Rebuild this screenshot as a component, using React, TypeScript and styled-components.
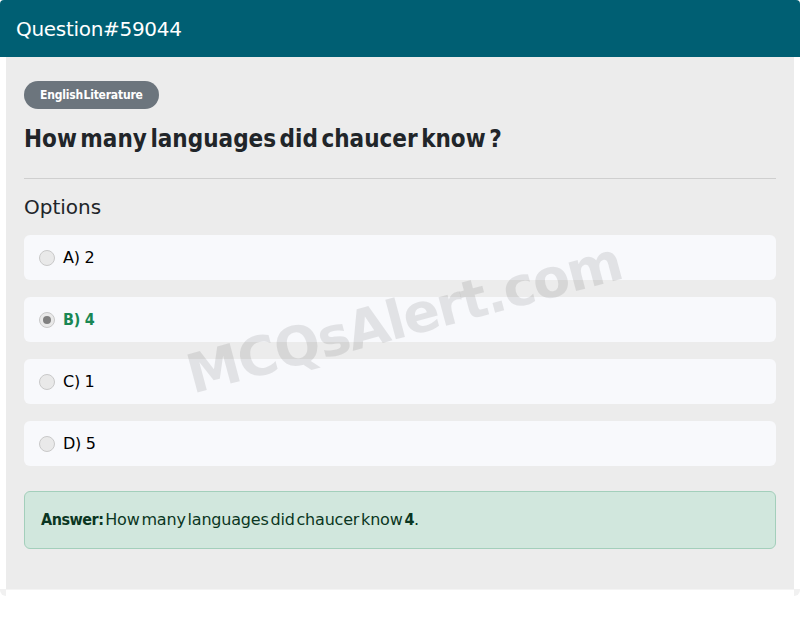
import React from 'react';
import styled, { createGlobalStyle } from 'styled-components';

const GlobalStyle = createGlobalStyle`
  html, body {
    margin: 0;
    padding: 0;
    background: #ffffff;
    font-family: 'DejaVu Sans', 'Liberation Sans', sans-serif;
  }
`;

const Card = styled.div`
  width: 800px;
`;

const Header = styled.div`
  height: 57px;
  background: #005f73;
  color: #ffffff;
  border-radius: 4px 4px 0 0;
  display: flex;
  align-items: center;
  padding: 0 16px;
  box-sizing: border-box;
  font-size: 20px;
  letter-spacing: -0.3px;
`;

const Body = styled.div`
  position: relative;
  overflow: hidden;
  margin: 0 6px;
  background: #ececec;
  padding: 24px 18px 40px;
`;

const Badge = styled.span`
  display: inline-block;
  background: #6c757d;
  color: #ffffff;
  font-family: 'DejaVu Sans Condensed', 'DejaVu Sans', sans-serif;
  font-weight: 700;
  font-size: 12px;
  line-height: 28px;
  height: 28px;
  padding: 0 16px;
  border-radius: 14px;
  letter-spacing: -0.2px;
  word-spacing: -3px;
`;

const Title = styled.h1`
  margin: 14px 0 0;
  font-family: 'DejaVu Sans Condensed', 'DejaVu Sans', sans-serif;
  font-size: 24px;
  font-weight: 700;
  line-height: 32px;
  color: #212529;
  word-spacing: -4px;
`;

const Divider = styled.hr`
  margin: 23px 0 15px;
  border: 0;
  border-top: 1px solid #cfcfcf;
`;

const SectionLabel = styled.h2`
  margin: 0 0 15px;
  font-size: 20px;
  font-weight: 400;
  line-height: 26px;
  color: #212529;
`;

const OptionList = styled.div`
  display: flex;
  flex-direction: column;
  gap: 17px;
`;

const OptionRow = styled.div`
  height: 45px;
  background: #f8f9fc;
  border-radius: 6px;
  display: flex;
  align-items: center;
  padding: 0 15px;
  gap: 8px;
`;

const Radio = styled.span<{ $checked?: boolean }>`
  width: 16px;
  height: 16px;
  box-sizing: border-box;
  border-radius: 50%;
  border: 1px solid #c9c9c9;
  background: #e9e9e9;
  display: flex;
  align-items: center;
  justify-content: center;
  &::after {
    content: '';
    display: ${(p) => (p.$checked ? 'block' : 'none')};
    width: 8px;
    height: 8px;
    border-radius: 50%;
    background: #808080;
  }
`;

const OptionText = styled.span<{ $correct?: boolean }>`
  font-family: ${(p) =>
    p.$correct ? "'DejaVu Sans Condensed', 'DejaVu Sans', sans-serif" : "'DejaVu Sans', sans-serif"};
  font-size: 16px;
  color: ${(p) => (p.$correct ? '#198754' : '#000000')};
  font-weight: ${(p) => (p.$correct ? 700 : 400)};
  letter-spacing: -0.3px;
`;

const AnswerBox = styled.div`
  margin-top: 25px;
  background: #d1e7dd;
  border: 1px solid #a3cfbb;
  border-radius: 6px;
  padding: 18px 16px;
  color: #0a3622;
  font-size: 16px;
  line-height: 20px;
  letter-spacing: -0.2px;
  word-spacing: -3px;
  b {
    font-family: 'DejaVu Sans Condensed', 'DejaVu Sans', sans-serif;
    font-weight: 700;
    letter-spacing: -0.5px;
  }
`;

const Watermark = styled.div`
  position: absolute;
  left: 398px;
  top: 261px;
  transform: translate(-50%, -50%) rotate(-15deg);
  font-size: 54px;
  font-weight: 700;
  color: rgba(0, 0, 0, 0.09);
  white-space: nowrap;
  pointer-events: none;
  letter-spacing: -1.5px;
`;

const Footer = styled.div`
  height: 7px;
  background: #f1f1f1;
  border-radius: 0 0 6px 6px;
  display: flex;
  &::before {
    content: '';
    flex: 1;
    margin: 0 6px;
    background: #ffffff;
    border-top: 1px solid #f4f4f4;
  }
`;

const options = [
  { key: 'A', value: '2' },
  { key: 'B', value: '4', correct: true },
  { key: 'C', value: '1' },
  { key: 'D', value: '5' },
];

const App: React.FC = () => {
  return (
    <>
      <GlobalStyle />
      <Card>
        <Header>Question#59044</Header>
        <Body>
          <Badge>English Literature</Badge>
          <Title>How many languages did chaucer know ?</Title>
          <Divider />
          <SectionLabel>Options</SectionLabel>
          <OptionList>
            {options.map((o) => (
              <OptionRow key={o.key}>
                <Radio $checked={o.correct} />
                <OptionText $correct={o.correct}>
                  {o.key}) {o.value}
                </OptionText>
              </OptionRow>
            ))}
          </OptionList>
          <AnswerBox>
            <b>Answer:</b> How many languages did chaucer know <b>4</b>.
          </AnswerBox>
          <Watermark>MCQsAlert.com</Watermark>
        </Body>
        <Footer />
      </Card>
    </>
  );
};

export default App;
